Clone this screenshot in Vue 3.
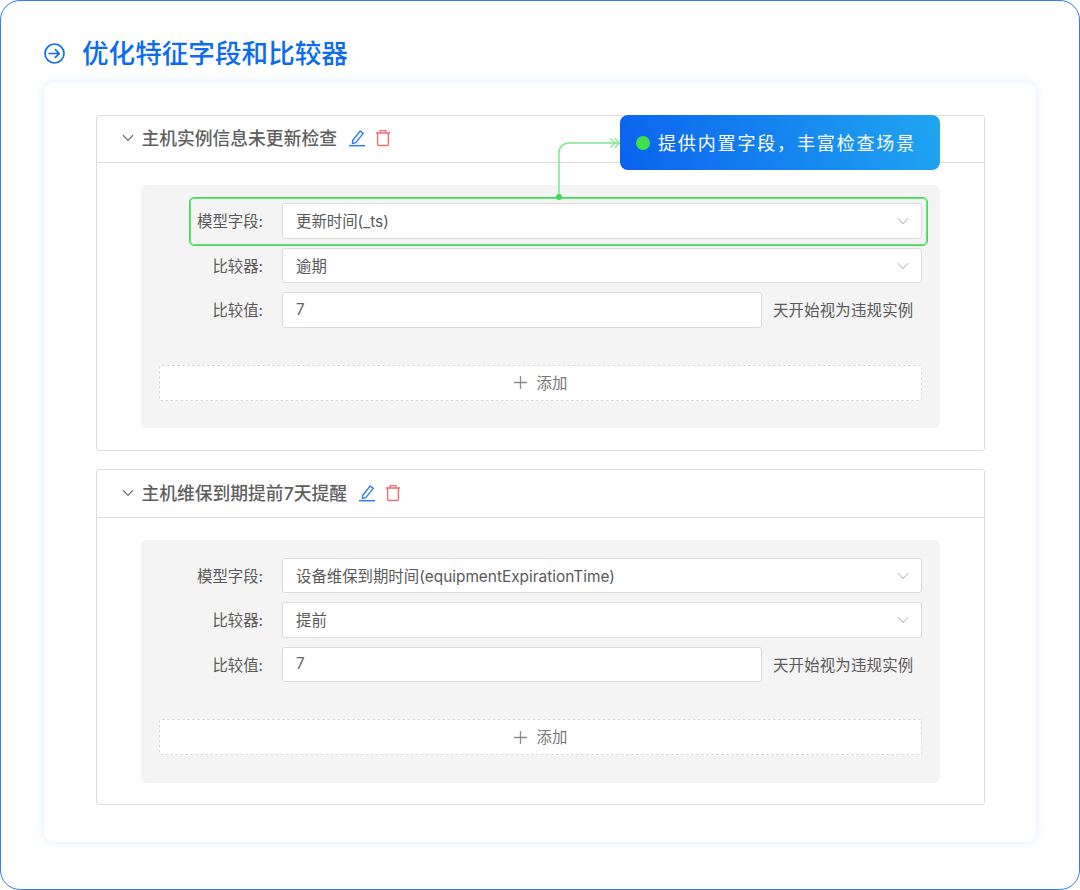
<script setup>
const rules = [
  {
    title: "主机实例信息未更新检查",
    field: "更新时间(_ts)",
    comparator: "逾期",
    value: "7",
  },
  {
    title: "主机维保到期提前7天提醒",
    field: "设备维保到期时间(equipmentExpirationTime)",
    comparator: "提前",
    value: "7",
  },
];
</script>

<template>
  <div class="frame">
    <h1 class="page-title">
      <svg class="title-icon" width="21" height="21" viewBox="0 0 21 21" fill="none">
        <circle cx="10.500" cy="10.500" r="9.500" stroke="#0b6cf0" stroke-width="1.7" />
        <path d="M5.200 10.500H15.300M11.400 6.600l3.900 3.900-3.900 3.900" stroke="#0b6cf0" stroke-width="1.7" stroke-linecap="round" stroke-linejoin="round" />
      </svg>
      <span>优化特征字段和比较器</span>
    </h1>

    <div class="card">
      <section v-for="rule in rules" :key="rule.title" class="panel">
        <header class="panel-head">
          <svg class="chevron" width="12" height="8" viewBox="0 0 12 8" fill="none">
            <path d="M1 1.200l5 5.200 5-5.200" stroke="#666" stroke-width="1.2" />
          </svg>
          <span class="panel-title">{{ rule.title }}</span>
          <svg class="act edit" width="18" height="18" viewBox="0 0 18 18" fill="none">
            <path d="M4.800 11.200L12.200 2l3 2.400-7.400 9.200-3.400 1z" stroke="#2f7cf0" stroke-width="1.4" stroke-linejoin="round" />
            <path d="M1 16.700h16" stroke="#2f7cf0" stroke-width="1.5" />
          </svg>
          <svg class="act trash" width="16" height="18" viewBox="0 0 16 18" fill="none">
            <path d="M1 4h14M5.200 4V1.600h5.600V4" stroke="#ea6b73" stroke-width="1.4" />
            <path d="M2.600 4v11.200c0 .8.5 1.300 1.300 1.300h8.200c.8 0 1.300-.5 1.300-1.300V4" stroke="#ea6b73" stroke-width="1.4" />
          </svg>
        </header>

        <div class="panel-body">
          <div class="group">
            <div class="row">
              <label class="label">模型字段:</label>
              <div class="control select">
                <span class="text">{{ rule.field }}</span>
                <svg width="12" height="8" viewBox="0 0 12 8" fill="none">
                  <path d="M.8 1l5.200 5.600L11.200 1" stroke="#bfbfbf" stroke-width="1.1" />
                </svg>
              </div>
            </div>
            <div class="row">
              <label class="label">比较器:</label>
              <div class="control select">
                <span class="text">{{ rule.comparator }}</span>
                <svg width="12" height="8" viewBox="0 0 12 8" fill="none">
                  <path d="M.8 1l5.200 5.600L11.200 1" stroke="#bfbfbf" stroke-width="1.1" />
                </svg>
              </div>
            </div>
            <div class="row">
              <label class="label">比较值:</label>
              <div class="control value"><span class="text">{{ rule.value }}</span></div>
              <span class="suffix">天开始视为违规实例</span>
            </div>
            <div class="add">
              <svg width="13" height="13" viewBox="0 0 13 13" fill="none">
                <path d="M6.500 0v13M0 6.500h13" stroke="#8c8c8c" stroke-width="1.3" />
              </svg>
              <span class="text">添加</span>
            </div>
          </div>
        </div>
      </section>
    </div>

    <div class="highlight"></div>
    <svg class="connector" width="68" height="66" viewBox="0 0 68 66" fill="none">
      <path d="M5 61V17C5 11 9 7 15 7h51" stroke="#7fe88f" stroke-width="1.5" />
      <path d="M56.500 2.500L61 7l-4.500 4.500M61 2.500L65.500 7 61 11.500" stroke="#7fe88f" stroke-width="1.3" />
      <circle cx="5" cy="61" r="3" fill="#3ddc55" />
    </svg>
    <div class="callout">
      <i class="dot"></i>
      <span class="callout-text">提供内置字段，丰富检查场景</span>
    </div>
  </div>
</template>

<style>
html,
body {
  margin: 0;
  background: #fff;
}
</style>

<style scoped>
.frame {
  position: relative;
  box-sizing: border-box;
  width: 1080px;
  height: 890px;
  padding: 34px 43px 0;
  border: 1px solid #2f7cf0;
  border-radius: 20px;
  background: #fff;
  font-family: Inter, "Noto Sans CJK SC", sans-serif;
  color: #595959;
}

.page-title {
  display: flex;
  align-items: center;
  height: 36px;
  margin: 0 0 11px;
  font-size: 26.6px;
  font-weight: 500;
  line-height: 36px;
  color: #0b6cf0;
}

.title-icon {
  margin-right: 17px;
}

.card {
  box-sizing: border-box;
  width: 992px;
  height: 760px;
  padding: 33px 51px 0 52px;
  border-radius: 10px;
  background: #fff;
  box-shadow: 0 0 10px rgba(70, 150, 255, 0.18);
}

.panel {
  box-sizing: border-box;
  height: 336px;
  margin-bottom: 18.4px;
  border: 1px solid #dedede;
  border-radius: 3px;
}

.panel-head {
  box-sizing: content-box;
  display: flex;
  align-items: center;
  height: 44.4px;
  padding: 0 0 2px 25px;
  border-bottom: 1px solid #dedede;
}

.chevron {
  margin-right: 7.4px;
}

.panel-title {
  padding-bottom: 2px;
  font-size: 17.8px;
  font-weight: 500;
  color: #5f5f5f;
}

.edit {
  margin-left: 10.600px;
}

.trash {
  margin-left: 9px;
}

.panel-body {
  padding: 22px 44px 0;
}

.group {
  box-sizing: border-box;
  height: 243px;
  padding: 18px 18px 0;
  border-radius: 6px;
  background: #f4f4f4;
}

.row {
  display: flex;
  align-items: center;
  height: 35.5px;
  margin-bottom: 9px;
  font-size: 15.4px;
}

.label {
  flex: none;
  box-sizing: border-box;
  width: 123px;
  padding: 0 19px 2px 0;
  text-align: right;
}

.text {
  padding-bottom: 2px;
}

.control {
  box-sizing: border-box;
  display: flex;
  align-items: center;
  height: 100%;
  padding: 0 12px 0 13px;
  border: 1px solid #dcdcdc;
  border-radius: 3px;
  background: #fff;
}

.select {
  flex: 1;
  justify-content: space-between;
}

.value {
  width: 480px;
  color: #666;
}

.suffix {
  margin-left: 11px;
  padding-bottom: 2px;
  letter-spacing: 0.2px;
  white-space: nowrap;
}

.add {
  box-sizing: border-box;
  display: flex;
  align-items: center;
  justify-content: center;
  gap: 10px;
  height: 36px;
  margin-top: 37px;
  border: 1px dashed #dadada;
  border-radius: 3px;
  background: #fff;
  font-size: 15.4px;
  color: #777;
}

.highlight {
  position: absolute;
  left: 188px;
  top: 196px;
  box-sizing: border-box;
  width: 739px;
  height: 49px;
  border: 1px solid #3ddc55;
  border-radius: 5px;
  box-shadow: inset 0 0 0 1px rgba(61, 220, 85, 0.75);
}

.connector {
  position: absolute;
  left: 553px;
  top: 135px;
}

.callout {
  position: absolute;
  left: 619px;
  top: 114px;
  box-sizing: border-box;
  display: flex;
  align-items: center;
  width: 320px;
  height: 55px;
  padding-left: 16px;
  border-radius: 8px;
  background: linear-gradient(70deg, #0a62ee 0%, #20a6f1 100%);
  font-size: 18px;
  letter-spacing: 1.85px;
  color: #fff;
}

.callout-text {
  padding-bottom: 2px;
}

.dot {
  width: 14px;
  height: 14px;
  margin-right: 8px;
  border-radius: 50%;
  background: #3de04f;
}
</style>
